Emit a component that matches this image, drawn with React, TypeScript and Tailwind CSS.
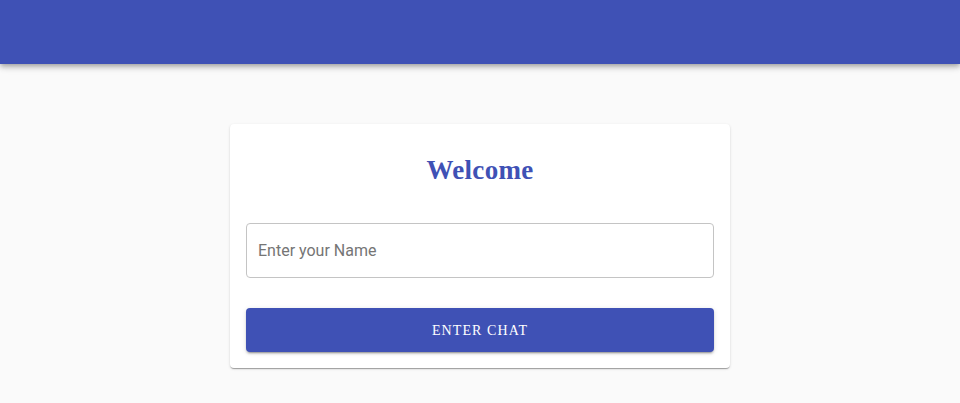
import React from "react";

export default function App() {
  return (
    <div className="min-h-[403px] w-full bg-[#fafafa]" style={{ fontFamily: "Roboto, 'Liberation Sans', sans-serif" }}>
      <header className="h-16 w-full bg-[#3f51b5] shadow-[0_2px_4px_-1px_rgba(0,0,0,0.2),0_4px_5px_0_rgba(0,0,0,0.14),0_1px_10px_0_rgba(0,0,0,0.12)]" />
      <div className="flex justify-center pt-[60px]">
        <div className="w-[500px] rounded bg-white px-4 pb-4 pt-[30px] shadow-[0_2px_1px_-1px_rgba(0,0,0,0.2),0_1px_1px_0_rgba(0,0,0,0.14),0_1px_3px_0_rgba(0,0,0,0.12)]">
          <h1
            className="text-center text-[27px] font-bold leading-8 tracking-[0.3px] text-[#3f51b5]"
            style={{ fontFamily: "'Liberation Serif', 'DejaVu Serif', serif" }}
          >
            Welcome
          </h1>
          <div className="mt-[37px] flex h-[55px] items-center rounded border border-[#c4c4c4] px-[11px]">
            <span className="text-base text-[#757575]">Enter your Name</span>
          </div>
          <button
            className="mt-[30px] flex h-11 w-full items-center justify-center rounded bg-[#3f51b5] text-[14px] tracking-[1.1px] text-white shadow-[0_3px_1px_-2px_rgba(0,0,0,0.2),0_2px_2px_0_rgba(0,0,0,0.14),0_1px_5px_0_rgba(0,0,0,0.12)]"
            style={{ fontFamily: "'Liberation Serif', serif" }}
          >
            ENTER CHAT
          </button>
        </div>
      </div>
    </div>
  );
}
